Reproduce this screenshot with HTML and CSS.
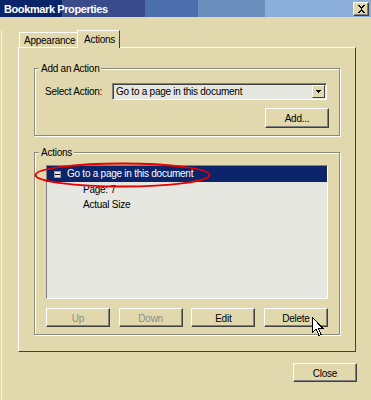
FILE: index.html
```html
<!DOCTYPE html>
<html lang="en">

<head>
    <meta charset="UTF-8">
    <meta name="viewport" content="width=device-width, initial-scale=1.0">
    <title>Bookmark Properties</title>
    <link rel="stylesheet" href="styles.css">
</head>

<body>
    <div class="titlebar">
        <span class="title">Bookmark Properties</span>
        <button class="close-x">
            <svg width="9" height="8" viewBox="0 0 9 8" shape-rendering="crispEdges">
                <path d="M1 0h2v1h1v1h1v-1h1v-1h2v1h-1v1h-1v1h-1v2h1v1h1v1h1v1h-2v-1h-1v-1h-1v1h-1v1h-2v-1h1v-1h1v-1h1v-2h-1v-1h-1z" fill="#000"/>
            </svg>
        </button>
    </div>
    <div class="frame">
        <div class="tabs">
            <div class="tab">Appearance</div>
            <div class="tab active">Actions</div>
        </div>
        <div class="panel">
            <div class="group add-group">
                <span class="legend">Add an Action</span>
                <div class="select-row">
                    <label>Select Action:</label>
                    <div class="select">
                        <span class="select-text">Go to a page in this document</span>
                        <span class="drop">
                            <svg width="5" height="3" viewBox="0 0 5 3" shape-rendering="crispEdges">
                                <path d="M0 0h5v1h-1v1h-1v1h-1v-1h-1v-1h-1z" fill="#000"/>
                            </svg>
                        </span>
                    </div>
                </div>
                <div class="add-row">
                    <button class="btn">Add...</button>
                </div>
            </div>
            <div class="group actions-group">
                <span class="legend">Actions</span>
                <div class="list">
                    <div class="row selected"><span class="toggle"></span>Go to a page in this document</div>
                    <div class="row child">Page: 7</div>
                    <div class="row child">Actual Size</div>
                </div>
                <div class="btn-row">
                    <button class="btn" disabled>Up</button>
                    <button class="btn" disabled>Down</button>
                    <button class="btn">Edit</button>
                    <button class="btn">Delete</button>
                </div>
                <!-- red callout around the selected action -->
                <svg class="callout" width="177" height="26" viewBox="0 0 177 26">
                    <ellipse cx="88.5" cy="13" rx="87" ry="11.5" fill="none" stroke="#e80000" stroke-width="2"/>
                </svg>
                <svg class="cursor" width="12" height="19" viewBox="0 0 12 19" shape-rendering="crispEdges">
                    <path d="M0.5 0.5V15.5L4 12L7 18.5L9 17.5L6.2 11H10.5Z" fill="#fff" stroke="#000" stroke-width="1"/>
                </svg>
            </div>
        </div>
        <div class="footer">
            <button class="btn">Close</button>
        </div>
    </div>
</body>

</html>
```

FILE: styles.css
```css
body {
    margin: 0;
    width: 371px;
    height: 400px;
    overflow: hidden;
    background-color: #e1d9ad;
    font-family: "Liberation Sans", Arial, sans-serif;
    font-size: 10px;
    letter-spacing: -0.25px;
    color: #000;
}

.titlebar {
    height: 17px;
    display: flex;
    align-items: center;
    padding-left: 4px;
    background: linear-gradient(to right,
        #0a246a 0 62px,
        #3a4c8c 62px 145px,
        #4e6fae 145px 198px,
        #6d8fbe 198px 265px,
        #8cafda 265px);
}

.title {
    flex: 1;
    color: #fff;
    font-weight: bold;
    font-size: 11px;
    letter-spacing: -0.4px;
}

.close-x {
    width: 16px;
    height: 14px;
    margin-right: 2px;
    padding: 0;
    display: flex;
    align-items: center;
    justify-content: center;
    background-color: #e1d9ad;
    border: 1px solid;
    border-color: #fff #404040 #404040 #fff;
    box-shadow: inset -1px -1px 0 #808080;
}

.frame {
    height: 383px;
    margin-left: 1px;
    border-left: 1px solid #f6f2de;
    border-bottom: 1px solid #505050;
    box-sizing: border-box;
}

.tabs {
    display: flex;
    align-items: flex-end;
    height: 17px;
    margin-top: 13px;
    padding-left: 17px;
}

.tab {
    height: 15px;
    box-sizing: border-box;
    padding: 1px 4px 0 4px;
    line-height: 13px;
    border-top: 1px solid #fff;
    border-left: 1px solid #fff;
}

.tab:first-child {
    width: 58px;
}

.tab.active {
    width: 43px;
    height: 18px;
    margin-bottom: -1px;
    padding: 2px 4px 0 6px;
    border-right: 1px solid #404040;
    background-color: #e1d9ad;
    position: relative;
    z-index: 1;
}

.panel {
    margin-left: 16px;
    width: 338px;
    height: 305px;
    box-sizing: border-box;
    padding: 20px 0 0 15px;
    border: 1px solid;
    border-color: #fff #404040 #404040 #fff;
}

.group {
    position: relative;
    width: 306px;
    box-sizing: border-box;
    border: 1px solid #8d8b7d;
    box-shadow: 1px 1px 0 #fff, inset 1px 1px 0 #fff;
}

.legend {
    position: absolute;
    top: -7px;
    left: 4px;
    padding: 0 2px;
    line-height: 13px;
    background-color: #e1d9ad;
}

.add-group {
    height: 68px;
    padding: 14px 11px 0 10px;
}

.select-row {
    display: flex;
    align-items: center;
}

.select-row label {
    width: 67px;
}

.select {
    width: 215px;
    height: 17px;
    box-sizing: border-box;
    display: flex;
    align-items: center;
    border: 1px solid;
    border-color: #808080 #fff #fff #808080;
    box-shadow: inset 1px 1px 0 #404040;
    background-color: #e7e7e1;
}

.select-text {
    flex: 1;
    padding-left: 3px;
}

.drop {
    width: 13px;
    height: 13px;
    margin-right: 1px;
    box-sizing: border-box;
    display: flex;
    align-items: center;
    justify-content: center;
    background-color: #e1d9ad;
    border: 1px solid;
    border-color: #fff #404040 #404040 #fff;
}

.add-row {
    display: flex;
    justify-content: flex-end;
    margin-top: 8px;
    margin-right: -1px;
}

.add-row .btn {
    height: 20px;
}

.btn {
    width: 64px;
    height: 19px;
    padding: 1px 0 0;
    font-family: inherit;
    font-size: 10px;
    letter-spacing: inherit;
    color: #000;
    background-color: #e1d9ad;
    border: 1px solid;
    border-color: #fff #404040 #404040 #fff;
    box-shadow: inset -1px -1px 0 #808080;
}

.btn:disabled {
    color: #8e8d86;
}

.actions-group {
    height: 183px;
    margin-top: 16px;
    padding: 12px 11px 0 11px;
}

.list {
    height: 134px;
    box-sizing: border-box;
    border: 1px solid;
    border-color: #808080 #fff #fff #808080;
    background-color: #e7e7e1;
}

.row {
    height: 15px;
    line-height: 15px;
}

.row.selected {
    height: 16px;
    line-height: 16px;
    display: flex;
    align-items: center;
    padding-left: 7px;
    color: #fff;
    background-color: #0c2469;
}

.toggle {
    width: 7px;
    height: 7px;
    margin-right: 6px;
    box-sizing: border-box;
    border: 1px solid #9a9a9a;
    background: linear-gradient(#e8e8e8 0 2px, #000 2px 3px, #e8e8e8 3px);
}

.row.child {
    padding-left: 36px;
}

.btn-row {
    display: flex;
    justify-content: space-between;
    margin-top: 9px;
}

.callout {
    position: absolute;
    left: -1px;
    top: 9px;
}

.cursor {
    position: absolute;
    left: 277px;
    top: 164px;
}

.footer {
    width: 355px;
    display: flex;
    justify-content: flex-end;
    margin-top: 11px;
}
```
